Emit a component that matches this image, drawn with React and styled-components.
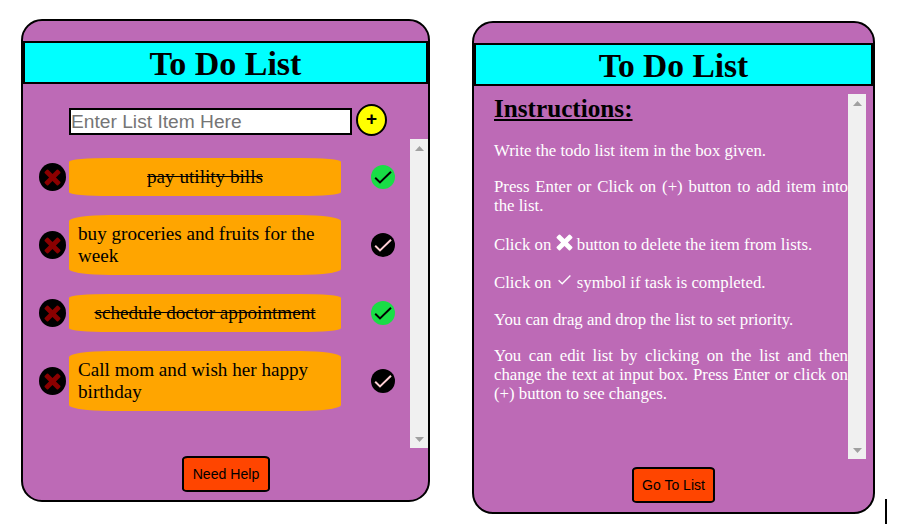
import React from 'react';
import styled, { createGlobalStyle } from 'styled-components';

const GlobalStyle = createGlobalStyle`
  * { box-sizing: border-box; }
  body { margin: 0; background: #fff; font-family: "Liberation Serif", "Times New Roman", serif; color: #000; overflow: hidden; }
  p, h1, h2, ul { margin: 0; padding: 0; }
`;

const Page = styled.main`
  display: flex;
  align-items: flex-start;
  width: 898px;
  height: 528px;
`;

const Card = styled.section`
  display: flex;
  flex-direction: column;
  flex: none;
  width: ${(p) => p.$width}px;
  height: ${(p) => p.$height}px;
  margin: ${(p) => p.$margin};
  padding-top: 20px;
  border: 2px solid #000;
  border-radius: 21px;
  background: #bd6ab6;
`;

const Banner = styled.h1`
  flex: none;
  height: 43px;
  border: 2px solid #000;
  background: #00ffff;
  text-align: center;
  font-size: ${(p) => p.$size}px;
  line-height: 41px;
  font-weight: bold;
`;

const EntryRow = styled.div`
  display: flex;
  align-items: center;
  gap: 4px;
  height: 32px;
  margin: 20px 0 0 46px;
`;

const Entry = styled.input`
  width: 283px;
  height: 27px;
  margin-top: 3px;
  padding: 0;
  border: 2px solid #000;
  border-radius: 0;
  background: #fff;
  font-family: "Liberation Sans", Arial, sans-serif;
  font-size: 19.2px;
  outline: none;
  &::placeholder { color: #757575; opacity: 1; }
`;

const AddButton = styled.button`
  width: 31px;
  height: 32px;
  padding: 0 0 3px;
  border: 2px solid #000;
  border-radius: 50%;
  background: #ffff00;
  font: bold 19px/24px "Liberation Sans", Arial, sans-serif;
  color: #000;
`;

const Scroller = styled.div`
  display: flex;
  flex: none;
  justify-content: space-between;
  height: ${(p) => p.$height}px;
  margin: ${(p) => p.$margin};
`;

const Track = styled.div`
  display: flex;
  flex-direction: column;
  justify-content: space-between;
  align-items: center;
  flex: none;
  width: 18px;
  padding: 7px 0 6px;
  background: #f0f0f0;
`;

const List = styled.ul`
  display: flex;
  flex-direction: column;
  gap: 19px;
  padding: 19px 0 0 16px;
  list-style: none;
`;

const Item = styled.li`
  display: flex;
  align-items: center;
`;

const ItemText = styled.div`
  width: 272px;
  margin: 0 30px 0 3px;
  padding: 8px 9px;
  border-radius: 15% / 10%;
  background: #ffa500;
  font-size: 19.15px;
  line-height: 22px;
  text-align: ${(p) => (p.$done ? 'center' : 'left')};
  text-decoration: ${(p) => (p.$done ? 'line-through' : 'none')};
`;

const Round = styled.button`
  display: flex;
  align-items: center;
  justify-content: center;
  flex: none;
  width: ${(p) => p.$w}px;
  height: ${(p) => p.$h}px;
  padding: 0;
  border: 0;
  border-radius: 50%;
  background: ${(p) => p.$bg};
`;

const Action = styled.button`
  flex: none;
  align-self: flex-start;
  width: ${(p) => p.$width}px;
  height: 36px;
  margin: ${(p) => p.$margin};
  padding: 0;
  border: 2px solid #000;
  border-radius: 6% / 10%;
  background: #ff4500;
  color: #000;
  font: ${(p) => p.$size}px "Liberation Sans", Arial, sans-serif;
`;

const Instructions = styled.div`
  width: 354px;
  color: #fff;
  font-size: 16.8px;
  line-height: 19px;
  text-align: justify;
`;

const Heading = styled.h2`
  height: 30px;
  color: #000;
  font-size: 25.2px;
  line-height: 29px;
  text-underline-offset: 2px;
  text-decoration: underline 2px;
`;

const Para = styled.p`
  height: ${(p) => p.$height}px;
  margin-top: 17px;
  padding-top: ${(p) => p.$pad || 0}px;
  white-space: ${(p) => (p.$single ? 'nowrap' : 'normal')};
`;

const InlineIcon = styled.svg`
  display: inline-block;
  vertical-align: ${(p) => p.$shift}px;
  margin: ${(p) => p.$margin};
`;

const Caret = styled.div`
  width: 2px;
  height: 25px;
  margin: 499px 0 0 10px;
  background: #000;
`;

const crossPath =
  'M4.2 .8 8.5 5.1 12.8 .8Q13.5 .1 14.2 .8L16.2 2.8Q16.9 3.5 16.2 4.2L11.9 8.5 16.2 12.8Q16.9 13.5 16.2 14.2L14.2 16.2Q13.5 16.9 12.8 16.2L8.5 11.9 4.2 16.2Q3.5 16.9 2.8 16.2L.8 14.2Q.1 13.5 .8 12.8L5.1 8.5 .8 4.2Q.1 3.5 .8 2.8L2.8 .8Q3.5 .1 4.2 .8Z';

function Scrollbar() {
  return (
    <Track>
      <svg width="9" height="5" viewBox="0 0 9 5"><path d="M0 5 4.5 0 9 5Z" fill="#a0a0a0" /></svg>
      <svg width="9" height="5" viewBox="0 0 9 5"><path d="M0 0 4.5 5 9 0Z" fill="#a0a0a0" /></svg>
    </Track>
  );
}

function TodoItem({ text, done }) {
  return (
    <Item>
      <Round $w={27} $h={28} $bg="#000" aria-label="Delete">
        <svg width="17" height="17" viewBox="0 0 17 17"><path d={crossPath} fill="#8b0000" /></svg>
      </Round>
      <ItemText $done={done}>{text}</ItemText>
      <Round $w={24} $h={24} $bg={done ? '#19dd46' : '#000'} aria-label="Complete">
        <svg width="24" height="24" viewBox="0 0 24 24">
          <path d="M4.2 12.8 9 17.4 20 6.8" fill="none" stroke={done ? '#000' : '#ffd0d5'} strokeWidth="2" />
        </svg>
      </Round>
    </Item>
  );
}

const items = [
  { text: 'pay utility bills', done: true },
  { text: 'buy groceries and fruits for the week', done: false },
  { text: 'schedule doctor appointment', done: true },
  { text: 'Call mom and wish her happy birthday', done: false },
];

export default function App() {
  return (
    <Page>
      <GlobalStyle />
      <Card $width={409} $height={483} $margin="19px 0 0 21px">
        <Banner $size={34}>To Do List</Banner>
        <EntryRow>
          <Entry placeholder="Enter List Item Here" />
          <AddButton>+</AddButton>
        </EntryRow>
        <Scroller $height={309} $margin="3px 0 0 0">
          <List>
            {items.map((item) => <TodoItem key={item.text} {...item} />)}
          </List>
          <Scrollbar />
        </Scroller>
        <Action $width={88} $size={14.1} $margin="8px 0 0 159px">Need Help</Action>
      </Card>
      <Card $width={403} $height={493} $margin="21px 0 0 42px">
        <Banner $size={33.5}>To Do List</Banner>
        <Scroller $height={365} $margin="8px 7px 0 20px">
          <Instructions>
            <Heading>Instructions:</Heading>
            <Para $height={19}>Write the todo list item in the box given.</Para>
            <Para $height={38}>Press Enter or Click on (+) button to add item into the list.</Para>
            <Para $height={24} $pad={3} $single>
              Click on{' '}
              <InlineIcon $shift={-1} $margin="-4px 0 0 0" width="17" height="17" viewBox="0 0 17 17">
                <path d={crossPath} fill="#fff" />
              </InlineIcon>{' '}
              button to delete the item from lists.
            </Para>
            <Para $height={20} $single>
              Click on{' '}
              <InlineIcon $shift={2} $margin="0" width="17" height="12" viewBox="0 0 17 12">
                <path d="M2.6 6.2 6.2 9.7 14.4 1.6" fill="none" stroke="#fff" strokeWidth="1.4" />
              </InlineIcon>{' '}
              symbol if task is completed.
            </Para>
            <Para $height={19}>You can drag and drop the list to set priority.</Para>
            <Para $height={57}>
              You can edit list by clicking on the list and then change the text at input box. Press Enter or click on (+) button to see changes.
            </Para>
          </Instructions>
          <Scrollbar />
        </Scroller>
        <Action $width={83} $size={14} $margin="8px 0 0 158px">Go To List</Action>
      </Card>
      <Caret />
    </Page>
  );
}
